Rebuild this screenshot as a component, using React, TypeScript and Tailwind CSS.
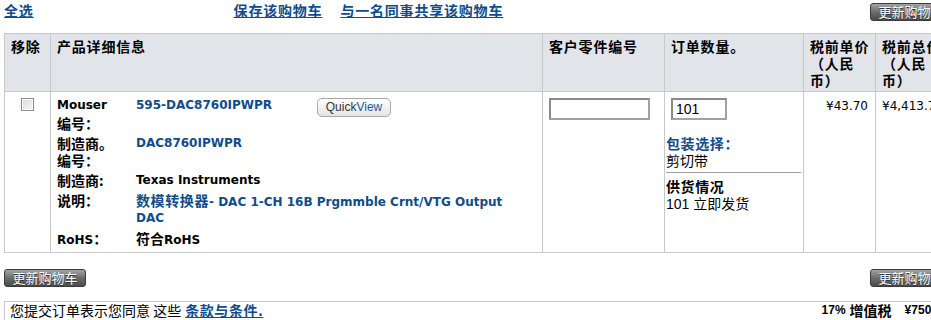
const blue = "text-[#0f4c8a]";

function DarkButton({ children }: { children: React.ReactNode }) {
  return (
    <button className="h-[18px] w-[82px] rounded-[3px] border border-[#3c3c3c] bg-linear-to-b from-[#a4a4a4] via-[#6c6c6c] to-[#4c4c4c] text-[13px] leading-[16px] text-white font-['Noto_Sans_CJK_SC',sans-serif] [text-shadow:0_1px_0_#333]">
      {children}
    </button>
  );
}

function Zh({ children, className = "" }: { children: React.ReactNode; className?: string }) {
  return <span className={`font-['Noto_Sans_CJK_SC',sans-serif] text-[14px] ${className}`}>{children}</span>;
}

// one text line of fixed height so mixed fonts don't stretch the row
function Line({ children, className = "" }: { children: React.ReactNode; className?: string }) {
  return <div className={`h-[17.5px] whitespace-nowrap ${className}`}>{children}</div>;
}

function DetailRow({ label, children }: { label: React.ReactNode; children: React.ReactNode }) {
  return (
    <div className="flex">
      <div className="w-[79px] shrink-0 font-bold text-black">{label}</div>
      <div className="flex-1">{children}</div>
    </div>
  );
}

export default function App() {
  const cell = "border border-[#c8c8c8] align-top";
  const th = `${cell} text-left pl-[6px] pt-[4px] pb-[2px] font-bold text-[14px] leading-[17px] tracking-[0.8px] text-black font-['Noto_Sans_CJK_SC',sans-serif]`;

  return (
    <div className="w-[931px] h-[320px] overflow-hidden bg-white">
      <div className="ml-[4px] w-[948px]">
        {/* top links */}
        <div className="flex h-[33px] items-start font-['Noto_Sans_CJK_SC',sans-serif] text-[14px] font-bold leading-[17px] tracking-[0.8px]">
          <a className={`mt-[2px] underline ${blue}`}>全选</a>
          <a className={`mt-[2px] ml-[200px] underline ${blue}`}>保存该购物车</a>
          <a className={`mt-[2px] ml-[18px] underline ${blue}`}>与一名同事共享该购物车</a>
          <div className="ml-auto mt-[3px] tracking-normal font-normal">
            <DarkButton>更新购物车</DarkButton>
          </div>
        </div>

        {/* cart table */}
        <table className="table-fixed w-[948px] border border-[#c8c8c8]">
          <colgroup>
            <col className="w-[46px]" />
            <col className="w-[492px]" />
            <col className="w-[122px]" />
            <col className="w-[139px]" />
            <col className="w-[72px]" />
            <col className="w-[77px]" />
          </colgroup>
          <thead>
            <tr className="h-[58px] bg-[#e1e4e9]">
              <th className={th}>移除</th>
              <th className={th}>产品详细信息</th>
              <th className={th}>客户零件编号</th>
              <th className={th}>订单数量。</th>
              <th className={`${th} pl-[4px] tracking-[0.4px]`}>
                税前单价
                <br />
                （人民
                <br />
                币）
              </th>
              <th className={`${th} pl-[4px] tracking-[0.4px]`}>
                税前总价
                <br />
                （人民
                <br />
                币）
              </th>
            </tr>
          </thead>
          <tbody>
            <tr>
              <td className={`${cell} pt-[6px]`}>
                <div className="mx-auto h-[13px] w-[13px] border border-[#8a8a8a] bg-linear-to-br from-[#dcdcdc] to-[#f6f6f6] shadow-[inset_0_0_0_1px_#fff]" />
              </td>
              <td className={`${cell} pl-[6px] pt-[5px] pb-[5px]`}>
                <div className="flex flex-col gap-[2.5px] text-[12px] leading-[17.5px] font-['DejaVu_Sans','Noto_Sans_CJK_SC',sans-serif]">
                  <div className="flex">
                    <div className="w-[79px] shrink-0 font-bold text-black">
                      <Line>Mouser</Line>
                      <Line>
                        <Zh>编号：</Zh>
                      </Line>
                    </div>
                    <Line className={`w-[181px] shrink-0 font-bold ${blue}`}>595-DAC8760IPWPR</Line>
                    <button className="mt-[1px] h-[19px] w-[74px] rounded-[5px] border border-[#a8a8a8] bg-linear-to-b from-white to-[#e4e4e4] text-[12px] leading-[17px] font-['Liberation_Sans',sans-serif]">
                      <span className="text-[#333]">Quick</span>
                      <span className="text-[#1b5a96]">View</span>
                    </button>
                  </div>
                  <DetailRow
                    label={
                      <>
                        <Line>
                          <Zh>制造商。</Zh>
                        </Line>
                        <Line>
                          <Zh>编号：</Zh>
                        </Line>
                      </>
                    }
                  >
                    <Line className={`font-bold ${blue}`}>DAC8760IPWPR</Line>
                  </DetailRow>
                  <DetailRow
                    label={
                      <Line>
                        <Zh>制造商:</Zh>
                      </Line>
                    }
                  >
                    <Line className="font-bold text-black">Texas Instruments</Line>
                  </DetailRow>
                  <DetailRow
                    label={
                      <Line>
                        <Zh>说明：</Zh>
                      </Line>
                    }
                  >
                    <Line className={`font-bold ${blue}`}>
                      <Zh className="tracking-[0.6px]">数模转换器</Zh>- DAC 1-CH 16B Prgmmble Crnt/VTG Output
                    </Line>
                    <Line className={`font-bold ${blue}`}>DAC</Line>
                  </DetailRow>
                  <DetailRow
                    label={
                      <Line>
                        RoHS<Zh>：</Zh>
                      </Line>
                    }
                  >
                    <Line className="font-bold text-black">
                      <Zh>符合</Zh>RoHS
                    </Line>
                  </DetailRow>
                </div>
              </td>
              <td className={`${cell} pl-[6px] pt-[6px]`}>
                <div className="h-[22px] w-[101px] border-2 border-[#a2a2a2] border-t-[#8a8a8a] border-l-[#8a8a8a]" />
              </td>
              <td className={`${cell} pl-[1px] pt-[6px] font-['Liberation_Sans','Noto_Sans_CJK_SC',sans-serif] text-[14px] leading-[17px] text-black`}>
                <div className="ml-[5px] flex h-[22px] w-[56px] items-center border-2 border-[#a2a2a2] border-t-[#8a8a8a] border-l-[#8a8a8a] pl-[3px] text-[14px]">
                  101
                </div>
                <div className={`mt-[16px] font-bold tracking-[0.6px] ${blue}`}>包装选择：</div>
                <div>剪切带</div>
                <div className="mt-[2px] w-[135px] border-t border-[#a0a0a0]" />
                <div className="mt-[6px] font-bold tracking-[0.6px]">供货情况</div>
                <div>101 立即发货</div>
              </td>
              <td className={`${cell} pr-[7px] pt-[7px] text-right text-[12px] leading-[15px] font-['DejaVu_Sans',sans-serif] text-black`}>
                ¥43.70
              </td>
              <td className={`${cell} pl-[6px] pt-[7px] text-left text-[12px] leading-[15px] font-['DejaVu_Sans',sans-serif] text-black whitespace-nowrap`}>
                ¥4,413.70
              </td>
            </tr>
          </tbody>
        </table>

        {/* update buttons */}
        <div className="mt-[16px] flex justify-between">
          <DarkButton>更新购物车</DarkButton>
          <DarkButton>更新购物车</DarkButton>
        </div>

        {/* terms / tax */}
        <div className="mt-[14px] flex h-[30px] items-start border-t border-l border-[#c8c8c8] pl-[5px] leading-[17px]">
          <Zh className="text-black">您提交订单表示您同意 这些 </Zh>
          <a className={`ml-[4px] font-bold underline tracking-[0.6px] ${blue} font-['Noto_Sans_CJK_SC',sans-serif] text-[14px]`}>条款与条件.</a>
          <div className="ml-auto flex items-start font-bold text-black">
            <span className="text-[12px] font-['Liberation_Sans',sans-serif]">17%</span>
            <Zh className="ml-[4px] text-[13px]">增值税</Zh>
            <span className="ml-[13px] pr-[4px] text-[12px] font-['Liberation_Sans',sans-serif]">¥750.33</span>
          </div>
        </div>
      </div>
    </div>
  );
}
